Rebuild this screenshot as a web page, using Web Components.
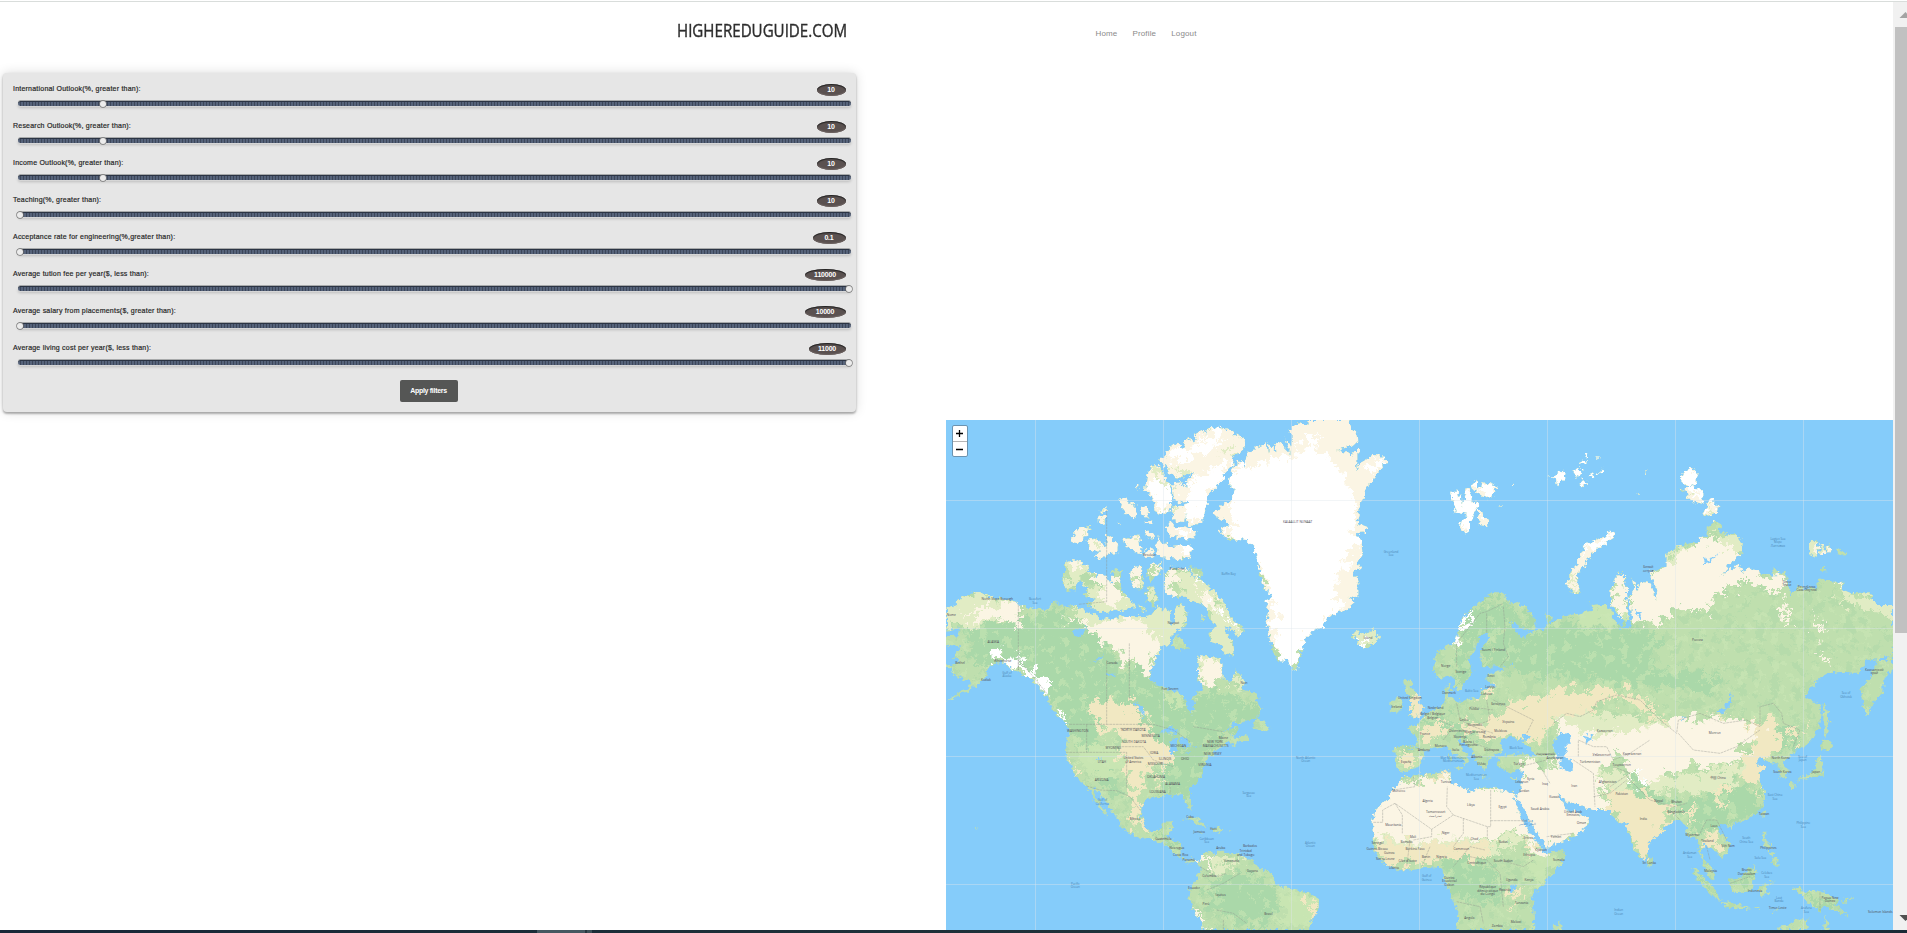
<!DOCTYPE html>
<html lang="en">
<head>
<meta charset="utf-8">
<title>HigherEduGuide.com</title>
<style>
html,body{margin:0;height:100%;overflow:hidden;background:#fff}
body{font-family:"Liberation Sans",Arial,sans-serif}
</style>
</head>
<body>
<app-shell>
  <site-header slot="main" brand="HIGHEREDUGUIDE.COM">
    <a>Home</a><a>Profile</a><a>Logout</a>
  </site-header>
  <filter-panel slot="main">
    <range-filter value="10" pos="10.3" badge="29">International Outlook(%, greater than):</range-filter>
    <range-filter value="10" pos="10.3" badge="29">Research Outlook(%, greater than):</range-filter>
    <range-filter value="10" pos="10.3" badge="29">Income Outlook(%, greater than):</range-filter>
    <range-filter value="10" pos="0.35" badge="29">Teaching(%, greater than):</range-filter>
    <range-filter value="0.1" pos="0.35" badge="33">Acceptance rate for engineering(%,greater than):</range-filter>
    <range-filter value="110000" pos="99.8" badge="41">Average tution fee per year($, less than):</range-filter>
    <range-filter value="10000" pos="0.35" badge="41">Average salary from placements($, greater than):</range-filter>
    <range-filter value="11000" pos="99.8" badge="37">Average living cost per year($, less than):</range-filter>
    <span slot="action">Apply filters</span>
  </filter-panel>
  <world-map slot="main"></world-map>
  <scroll-rail slot="rail"></scroll-rail>
  <task-strip slot="bottom"></task-strip>
</app-shell>

<script>
const define = (name, html, setup) => customElements.define(name, class extends HTMLElement {
  constructor() {
    super();
    this.attachShadow({ mode: 'open' }).innerHTML = html;
  }
  connectedCallback() { if (setup) setup(this, this.shadowRoot); }
});

define('app-shell', `
<style>
:host{display:grid;grid-template:2px 1fr 3px / minmax(0,1fr) 14px;height:100vh;width:100vw;background:#fff;overflow:hidden}
.line{grid-column:1/3;border-top:1px solid #fff;background:#d9dddb;box-sizing:border-box}
.main{display:flex;flex-direction:column;min-height:0;overflow:hidden}
.bottom{grid-column:1/3}
</style>
<div class="line"></div><div class="main"><slot name="main"></slot></div><slot name="rail"></slot><div class="bottom"><slot name="bottom"></slot></div>`);

define('site-header', `
<style>
:host{display:flex;height:71px;box-sizing:border-box;padding:0 0 0 676.5px;align-items:flex-start;flex:none}
.brand{width:419px;padding-top:16px;font:500 18px/24px "Open Sans",sans-serif;color:#2d2d2d;-webkit-text-stroke:.4px #2d2d2d}
.brand span{display:inline-block;transform-origin:0 50%;white-space:nowrap}
nav{display:flex;gap:15px;padding-top:27px;font-size:8px;letter-spacing:.15px;line-height:10px;color:#8a8a8a}
</style>
<div class="brand"><span></span></div><nav><slot></slot></nav>`, (el, root) => {
  const s = root.querySelector('span');
  s.textContent = el.getAttribute('brand');
  s.style.transform = `scaleX(${170.5 / s.offsetWidth})`;
});

define('filter-panel', `
<style>
:host{display:flex;flex-direction:column;flex:none;width:853px;height:339px;margin-left:3px;box-sizing:border-box;background:#e6e6e6;border-radius:4px;padding-top:10px;
 box-shadow:0 2px 2px rgba(0,0,0,.22),0 1px 3px rgba(0,0,0,.14),0 0 12px rgba(0,0,0,.14)}
button{align-self:center;margin:1px 2px 0 0;width:58px;height:22px;padding:0;border:0;border-radius:2px;background:#555655;color:#fff;font:bold 7px/22px "Liberation Sans",Arial,sans-serif;letter-spacing:-.3px}
</style>
<slot></slot><button><slot name="action"></slot></button>`);

define('range-filter', `
<style>
:host{display:block;height:37px;flex:none}
.head{display:flex;justify-content:space-between;height:14px;padding:1px 10.5px 0 10px;box-sizing:border-box;font-size:7px;line-height:10px;color:#222;-webkit-text-stroke:.2px #333}
label{letter-spacing:.22px}
output{height:12px;line-height:12px;text-align:center;border-radius:50%;background:#5a5150;color:#fff;-webkit-text-stroke:0;box-shadow:inset 0 1px 1px #222,inset 0 -1px 1px #6d6361;flex:none;font-weight:bold;letter-spacing:-.2px}
.track{margin:4px 5.5px 0 14.5px;border-radius:3px;border-top:1px solid #2b3444;box-sizing:border-box;height:5px;
 background:repeating-linear-gradient(90deg,#56637a 0 2px,#3c4659 2px 3px);box-shadow:0 -1px 0 #a8aaab,0 1px 0 #d6d6d6,0 2px 3px rgba(0,0,0,.18);display:flex;align-items:center}
.gap{width:var(--pos);flex:none}
i{width:6px;height:6px;margin-left:-3px;margin-top:-1px;border-radius:50%;background:#ececec;box-shadow:0 0 0 .7px #777;flex:none}
</style>
<div class="head"><label><slot></slot></label><output></output></div>
<div class="track"><span class="gap"></span><i></i></div>`, (el, root) => {
  const o = root.querySelector('output');
  o.textContent = el.getAttribute('value');
  o.style.width = el.getAttribute('badge') + 'px';
  el.style.setProperty('--pos', el.getAttribute('pos') + '%');
});

define('map-zoom', `
<style>
:host{display:block;width:14px;border:1px solid #6b93b0;border-radius:2px;background:#fff;overflow:hidden}
b{display:flex;align-items:center;justify-content:center;height:15px}
b+b{border-top:1px solid #b5b5b5;height:14px}
svg{display:block;width:7px;height:7px}
</style>
<b><svg viewBox="0 0 6 6"><path d="M3 0v6M0 3h6" stroke="#000" stroke-width="1.1"/></svg></b>
<b><svg viewBox="0 0 6 6"><path d="M0 3h6" stroke="#000" stroke-width="1.1"/></svg></b>`);

define('scroll-rail', `
<style>
:host{display:flex;flex-direction:column;background:#f1f1f1;overflow:hidden}
svg{display:block;width:14px;flex:none}
.thumb{height:606px;margin-left:2px;background:#c1c1c1}
.space{flex:1}
</style>
<svg height="25" viewBox="0 0 14 25"><path d="M6.5 16l6-6 6 6z" fill="#a3a3a3"/></svg>
<div class="thumb"></div><div class="space"></div>
<svg height="18" viewBox="0 0 14 18"><path d="M6.5 3l6 6 6-6z" fill="#505050"/></svg>`);

define('task-strip', `
<style>
:host{display:flex;height:3px;background:linear-gradient(90deg,#182838,#1c2f38 40%,#22343c 75%,#1a2b36)}
.lead{width:537px}
.active{width:48px;background:#465861}
.seam{width:2px;background:#26363e}
.stack{width:5px;background:#3d5058}
</style><span class="lead"></span><span class="active"></span><span class="seam"></span><span class="stack"></span>`);

/* Map data: each capital letter picks the chart sheet whose origin the following points use. */
const SHEETS = { A: [-18, -30], B: [882, -30], C: [1842, -30], D: [-18, 720], E: [882, 720], F: [1842, 720] };
const trace = (str, closed = true) => str.trim().split(/\s*;\s*/).filter(Boolean).map(poly => {
  let o = trace.last, pts = [];
  for (const t of poly.trim().split(/\s+/)) {
    if (SHEETS[t]) { o = trace.last = SHEETS[t]; continue; }
    const [x, y] = t.split(',').map(Number);
    pts.push((x + o[0]) + ' ' + (y + o[1]));
  }
  return 'M' + pts.join('L') + (closed ? 'Z' : '');
}).join('');
trace.last = SHEETS.A;

const LAND = `
A 0,600 45,590 60,565 100,545 140,555 180,568 220,572 245,585 270,600 300,590 320,600 345,570 365,590 400,585 430,600 460,612 490,630 540,620 600,622 625,620 640,600 655,590 665,602 680,590 692,610 690,645 705,632 705,610 715,585 735,590 742,615 735,650 712,660 690,680 690,702 660,715 650,740 635,780 D 635,20 628,50 650,75 690,90 735,110 740,145 755,165 765,140 758,110 775,95 790,85 775,60 773,0 A 775,740 800,738 840,745 D 845,20 848,55 875,62 885,28 900,45 910,60 915,90 950,105 960,118 E 40,115 62,145 50,170 30,180 0,188 D 925,185 880,190 850,215 875,205 895,200 890,215 870,230 900,235 925,222 925,237 890,250 878,262 872,240 855,250 850,258 830,270 810,290 795,305 790,330 785,350 760,375 748,390 750,410 756,445 745,447 732,420 728,405 710,403 680,405 665,412 640,410 615,420 605,440 603,470 615,500 630,517 655,515 665,500 670,488 697,487 690,510 680,530 700,540 728,545 725,575 722,588 740,600 760,598 780,607 780,620 765,606 745,608 725,597 700,577 690,562 660,547 640,537 620,532 600,535 575,522 545,502 540,480 525,465 510,445 500,430 490,415 475,395 458,380 470,410 485,435 500,465 502,470 490,460 475,435 462,420 455,400 440,378 420,360 405,345 395,320 380,300 378,275 383,240 390,215 385,200 370,180 350,165 335,140 320,110 300,90 280,65 250,45 225,30 200,15 180,5 150,20 130,60 90,90 50,110 22,122 60,95 85,80 95,65 60,50 40,42 35,25 0,20 A 0,770 60,760 50,740 35,745 64,710 30,705 0,695 0,682 50,680 60,655 0,665;
A 375,455 405,448 430,462 450,470 440,490 415,515 405,540 385,545 368,520 375,490;
425,500 445,485 465,490 460,503 480,495 500,500 518,525 515,490 525,475 545,480 540,510 545,540 575,575 590,590 540,600 500,605 470,605 440,580 470,570 430,555 445,535 430,530;
565,490 590,470 608,468 605,500 612,525 595,540 580,525;
628,465 665,460 660,485 640,500 632,520 622,500; 622,530 640,530 652,570 640,590 618,570;
675,490 690,473 745,475 750,500 775,500 800,525 830,550 850,570 860,600 880,630 910,650 905,670 890,680 880,660 850,655 880,700 885,740 860,735 835,700 805,690 810,665 830,650 805,625 800,590 760,575 735,560 700,560 675,548 672,510;
750,472 785,480 790,497 760,497; 700,680 715,675 730,695 748,715 722,720 702,710; 788,615 800,628 785,640; 597,585 620,600 610,610;
650,380 665,400 700,410 750,405 758,420 750,445 700,445 655,440 650,410;
660,140 675,142 685,120 712,98 725,112 738,118 732,95 748,85 768,100 765,72 785,60 798,78 800,58 820,52 845,55 870,60 890,75 912,90 910,115 880,140 885,155 860,182 840,220 800,260 800,290 795,320 770,345 745,348 735,300 740,260 735,215 765,185 720,203 685,195 680,175 665,160;
680,350 692,332 705,348 740,350 770,365 765,385 740,385 690,380; 625,180 645,162 665,175 680,215 695,225 695,260 690,300 670,312 640,300 640,270 615,240 620,205;
700,220 725,217 745,250 740,275 715,280 700,260; 695,290 740,285 735,340 705,335;
538,265 555,265 570,280 585,285 590,320 575,325 560,310 545,290; 600,290 620,290 626,322 610,322; 617,332 640,335 640,342 618,340;
393,390 415,355 450,345 445,370 420,395 405,395; 440,390 470,385 480,400 500,412 500,375 515,380 520,400 535,400 530,430 505,432 475,447 465,440 480,424 450,425;
475,320 495,318 495,340 478,345; 475,303 500,292 500,306; 548,380 575,388 575,375 600,378 605,430 580,425 555,405; 620,415 635,412 640,440 612,440; 615,362 640,370 642,385 620,385; 585,228 592,225 592,240; 536,335 545,355 538,345;
A 870,210 880,170 905,150 915,175 B 15,160 20,135 45,115 80,100 84,135 88,103 110,130 105,95 118,98 150,130 137,85 155,110 155,70 145,60 175,40 210,44 205,20 320,20 330,50 350,70 352,95 335,110 285,120 325,125 335,140 343,120 355,120 355,155 342,188 365,155 400,135 430,137 440,155 415,185 400,215 375,240 370,270 360,285 355,320 350,340 378,350 378,370 350,372 368,400 370,430 355,460 362,475 340,480 352,520 352,565 325,560 345,575 310,605 265,618 250,650 215,665 195,690 180,740 175,780 E 175,10 165,30 145,5 120,0 B 118,760 100,730 90,690 80,640 85,600 72,570 95,560 65,520 60,470 40,410 20,390 0,387 A 895,387 870,392 848,375 835,360 870,345 830,320 820,310 850,285 875,270 885,240 870,225;
B 335,668 350,660 355,672 365,670 380,668 400,658 420,680 410,700 380,715 350,705 355,692 338,680;
630,245 650,245 655,265 665,250 668,290 680,235 690,240 695,270 718,285 700,310 682,375 660,350 665,330 685,315 660,310 648,308 635,270;
695,225 710,215 712,232 725,230 735,212 740,218 770,230 765,250 740,268 715,250 700,240; 713,300 725,300 730,320 748,330 735,348 720,345;
808,228 820,222 815,228; 778,283 790,283 780,287; 925,200 945,198 960,185 977,190 972,205 950,223 948,208; 985,218 995,215; 1003,185 1020,175 1020,195;
C 0,190 15,185 15,200 0,205; 40,185 58,178 68,190 50,200; 55,165 70,150 78,160; 85,198 105,190 100,208; 113,190 132,173 132,188 120,193; 58,222 70,210 82,215 70,228; 75,138 82,132 80,140; 112,142 120,143 116,146; 254,186 262,184 260,189; 228,250 237,253 232,256;
20,520 25,505 40,480 55,450 80,400 110,390 140,370 160,362 165,380 140,400 110,415 90,440 70,470 55,490 50,520 65,555 45,555 20,535;
370,185 385,180 392,167 400,180 412,190 405,220 380,230 360,210; 358,235 375,235 370,245; 375,240 395,225 410,235 430,235 430,285 405,278 380,255; 430,320 440,290 450,265 475,290 470,308 445,315; 485,313 495,317; 346,172 358,172;
750,400 765,393 778,410 770,440 752,432; 782,420 790,398 798,435 780,435; 797,410 812,405 812,427 800,427; 830,415 860,430 855,438 835,430; 780,475 795,467 800,487 785,485; 847,373 852,372 850,376;
175,485 188,487 180,492; 80,570 95,580 85,578;
B 583,740 605,715 640,705 655,660 665,625 700,590 730,570 755,550 790,550 800,570 840,585 870,600 890,640 880,660 840,655 825,635 812,640 835,672 860,692 862,670 895,660 915,660 925,640 913,610 935,620 930,640 960,625 1000,610 C 55,615 100,600 95,585 130,582 155,605 165,640 185,650 195,635 155,590 150,550 165,500 195,498 200,530 205,600 200,640 180,655 205,655 215,640 215,600 208,560 222,545 215,500 230,540 245,515 270,520 288,570 292,540 265,485 300,475 320,470 320,430 370,405 410,395 430,380 440,380 440,350 465,335 485,345 475,355 490,375 530,372 548,400 545,430 520,450 480,500 520,470 540,470 548,490 560,475 590,480 600,490 650,500 632,488 640,475 655,490 675,483 685,530 697,555 710,530 770,535 780,505 820,515 850,515 850,540 880,553 935,550 945,585 1050,585 F 1050,0 985,35 970,60 970,100 945,120 920,165 905,120 905,80 935,50 945,20 950,0 C 980,750 990,735 970,740 960,748 920,750 900,778 F 900,40 850,35 795,42 760,75 735,110 760,125 775,125 785,160 780,200 760,230 730,265 705,265 700,280 680,300 665,305 685,335 680,350 658,357 660,330 650,310 640,305 615,302 600,290 585,305 600,318 620,318 597,340 600,370 615,390 615,420 600,450 570,475 540,485 510,500 480,490 475,510 500,535 510,560 505,580 478,600 475,580 465,570 445,560 430,550 425,580 430,600 455,620 465,650 460,662 445,645 432,615 420,590 415,560 410,530 395,535 385,530 380,500 360,480 345,480 320,500 290,530 265,555 262,590 245,600 225,570 205,520 200,490 190,485 175,490 160,470 145,450 100,450 70,445 60,435 30,428 10,420 0,400 E 955,403 965,430 975,440 985,455 1000,462 F 30,465 40,450 48,448 60,465 87,480 75,505 40,530 0,547 E 925,560 915,565 905,540 880,500 860,460 840,430 830,415 838,390 845,370 850,335 830,330 810,340 790,330 770,312 775,303 768,295 800,285 850,280 893,290 870,265 845,250 860,240 870,225 840,225 855,238 830,240 815,230 790,230 780,250 785,275 770,282 740,300 735,330 720,320 705,290 700,275 670,245 655,235 660,255 685,285 680,315 665,300 645,285 630,270 620,255 600,260 575,265 555,275 540,310 530,325 500,335 485,335 465,325 465,290 463,262 495,262 530,265 530,235 500,200 530,195 545,175 580,150 600,140 615,125 612,90 628,70 630,95 625,115 660,125 700,115 722,110 722,90 740,85 770,80 745,65 740,45 775,35 800,20 770,18 730,22 722,5 B 722,750 720,730 750,680 735,670 715,690 700,720 685,750 690,778 E 690,10 700,30 680,60 660,90 648,90 640,50 625,45 595,60 583,30;
E 490,65 500,58 515,55 512,80 525,100 540,112 535,125 552,140 540,165 497,173 520,160 503,148 515,135 510,110 495,95; 455,125 480,110 487,140 475,155 452,155;
490,350 540,345 600,335 632,335 630,370 660,380 700,400 715,380 760,385 800,395 820,392 833,425 818,405 830,440 850,490 880,530 905,567 915,580 975,572 970,600 940,640 900,680 875,710 880,740 885,850 650,850 655,760 640,720 625,690 610,650 608,625 560,620 520,630 480,632 450,620 415,595 395,550 400,525 395,485 410,450 440,420 460,385 485,365;
935,850 945,800 960,780 972,850;
D 780,605 790,585 815,570 822,590 830,575 850,575 900,585 930,600 960,625 E 95,640 110,675 150,685 210,700 240,720 238,750 210,790 200,850 D 805,850 785,790 745,715 750,680 770,655 782,630;
718,482 745,468 775,478 800,497 780,499 755,480 740,474; 812,505 835,502 855,512 825,516; 768,515 790,517 780,520; 865,514 878,515 868,518; 107,498 114,500 112,507; 75,482 80,484;
E 35,205 55,165 60,185 72,185 88,215 60,210; 645,322 668,322 662,333; 722,350 748,350 725,353; 815,357 832,352 820,362; 625,285 634,290 630,308;
F 788,238 820,255 805,272 780,275; 775,288 790,300 785,348 760,352 725,358 705,360 740,345 765,325; 690,370 705,370 700,390 690,390; 712,362 730,360 720,367; 790,120 800,150 808,190 795,238 790,190;
605,455 617,450 612,478; 507,488 523,485 515,510; 605,515 620,515 615,540 637,560 622,565 607,545; 640,590 655,600 655,622 635,612; 622,575 648,578 635,590; 595,592 612,572; 262,588 277,600 270,622 260,610;
393,627 412,632 430,650 460,680 485,720 465,715 430,680 410,650; 483,726 530,732 570,745 545,748 500,740; 510,660 540,655 560,635 582,618 590,635 580,660 575,690 545,700 520,698 512,680; 600,680 610,672 648,662 615,678 625,700 612,692 608,718 600,700; 697,683 725,683 730,700 760,690 800,700 835,722 825,735 865,767 830,755 800,740 780,752 750,735 735,712 705,695; 635,850 660,800 690,795 700,780 742,777 735,850; 780,850 795,768 820,850; 580,745 605,744 600,750; 632,758 655,745 640,760; 840,722 870,715 880,708 860,728; 672,655 668,668; 815,240 822,260`;

const WATER = `E 940,250 960,222 F 0,218 30,222 32,248 15,265 20,290 38,310 38,335 E 985,335 960,325 958,295 940,270;
F 75,228 100,222 92,245 78,248; 468,157 490,145 500,130 515,97 512,130 490,155; 230,270 245,270 240,274; 365,172 378,174 368,178;
D 655,218 685,198 715,212 700,224 675,216; 692,235 715,238 705,278 690,280; 718,232 738,233 750,255 732,266; 730,285 755,272 745,283; 760,262 787,256 765,265; 580,125 592,125 610,150 612,180 600,150; 500,40 530,42 505,48; 475,288 483,300 474,298;
A 450,757 470,745 500,728 480,748; 398,660 440,655 420,680 400,675; 375,660 388,660;
E 806,677 830,670 830,690 812,697; 848,640 852,655; 790,745 795,765; 812,15 820,5 818,22; 828,785 834,805; 832,420 842,425 872,485 905,545 912,565 900,545 870,510 845,465;
C 428,440 440,450 475,430 465,440 450,455 435,460; 325,570 328,590; 225,600 240,605 245,630 238,628`;

/* Vegetation and ice zones, painted in order inside the coastline. */
const ZONES = [
['#aad8a9', `A 60,640 200,640 300,605 350,600 440,640 520,720 540,780 D 600,10 660,80 740,110 780,100 850,95 960,130 E 70,180 D 850,230 800,290 780,370 740,400 700,400 660,330 640,240 610,170 520,120 460,120 470,200 480,300 530,360 530,420 500,380 400,230 300,90 200,0 A 100,760;
D 700,350 790,340 750,410 640,410; 640,500 730,560 700,570;
B 660,680 690,600 780,570 850,620 1020,650 C 140,660 240,650 300,700 260,780 F 480,40 440,110 400,90 200,70 100,60 E 900,50 800,30 720,10 B 780,660 700,700 E 700,60 640,70;
C 360,550 480,510 500,520 440,560 380,570;
F 360,420 430,410 500,370 610,400 600,460 480,500 400,520 370,480; 470,370 540,370 530,400; 600,200 730,200 700,280 640,260;
180,340 240,370 320,420 400,430 400,450 300,430 220,390;
E 620,610 700,590 790,650 780,720 680,730 630,680; D 790,690 860,640 960,650 E 110,690 100,780 20,800 D 860,770 800,740; F 510,650 590,630 570,700; 700,690 850,740 800,750; 425,640 480,720 400,640; E 530,180 620,170 720,240 660,230; E 560,270 480,275 470,300;`],
['#c8e5b2', `C 0,590 160,580 200,650 60,640; E 860,560 960,590 880,700 870,600; E 120,690 230,710 220,800 130,800; D 400,260 560,260 540,340 440,350; D 660,80 740,110 740,150 690,120; E 400,560 440,560 470,600 420,600`],
['#e1ecc4', `A 0,590 100,540 250,580 230,620 100,650 0,640; A 370,440 460,460 400,560; A 400,590 640,600 700,560 760,620 690,700 620,760 520,700 440,650; A 430,530 560,550 600,610 470,620; 600,520 660,530 650,600; 700,470 800,500 900,640 900,760 790,700 820,640 740,570; A 760,730 860,740 D 860,60 770,60; C 310,460 330,420 550,360 550,410 480,500 400,440; C 850,520 1000,580 1000,620 840,580; F 0,170 130,160 220,170 350,180 280,240 0,230; F 200,300 360,350 490,330 580,280 640,230 600,310 480,390 400,400 280,390; F 100,340 230,330 150,400; D 870,30 920,50 900,100; E 395,520 520,540 760,545 870,510 890,540 760,570 540,560 400,545; B 60,490 80,500 110,620 90,680 60,640; D 800,640 830,590 910,590 880,620; C 740,380 800,380 800,450 740,450; B 330,650 430,650 430,720 330,720`],
['#f1e8c2', `D 455,118 560,130 620,170 620,210 690,270 700,320 620,330 600,420 570,390 545,300 540,210 480,215 462,170; D 385,290 425,350 410,360; D 600,405 610,430 600,500 640,520 600,520 540,450 560,470; D 655,310 670,320 660,400;
E 820,130 1000,80 1020,150 940,180 900,250 800,220 720,210 660,200 740,190; F 0,90 160,90 250,110 310,180 160,105 60,170 0,160; E 540,200 620,190 600,240 550,250; E 470,290 530,280 540,310 490,330; E 620,180 820,210 770,240 680,225; E 700,90 760,90 720,120; E 410,550 760,555 740,590 600,600 540,610 470,620 400,580; 850,540 890,560 870,600; 
F 150,370 230,390 340,460 280,540 250,600 200,510 150,460; F 450,150 560,190 600,180 650,180 670,240 640,260 620,330 600,400 530,320 600,250; F 460,390 500,390 500,420 470,430; F 430,520 470,510 480,570 430,555; F 380,450 400,450 400,520; F 690,210 730,200 700,250; E 790,700 850,720 800,740 850,690; E 200,740 240,720 230,780; E 460,260 520,330 500,340; F 80,240 150,250 150,290 90,270; E 960,350 1000,400 960,380; E 900,350 950,390 930,390; 500,350 640,330 620,355;E 490,100 560,120 550,170 510,170`],
['#fbf5e4', `A 60,620 170,575 250,590 230,640 120,620; A 380,620 460,640 500,640 560,620 620,650 660,720 640,790 560,760 520,710 440,660; D 560,-20 650,0 630,50; A 450,490 520,500 560,560 500,590; A 380,140 860,20 1000,60 940,180 800,360 800,460 360,460 380,330; 560,470 610,460 600,540; 625,455 670,455 640,500; 670,480 710,480 700,560 670,550; 770,540 830,560 850,610 800,600; D 780,0 840,0 840,70 800,90; 340,650 410,650 350,720 370,760 300,690;
B 60,350 110,500 110,660 60,580; A 800,200 900,140 B 20,90 210,10 470,10 470,200 400,500 350,620 200,700 150,780 80,700 60,500 0,400 A 800,400; B 600,190 1020,150 1020,250 820,400 600,400; C 0,120 300,120 500,150 500,330 400,340 340,200 180,390 60,510 30,580 -30,480; C 140,490 200,490 200,640 160,580; C 210,510 320,460 440,380 500,400 530,430 560,470 680,510 660,550 560,510 460,560 440,610 350,590 290,640 210,630; C 670,560 690,640 670,670; 760,590 800,680 770,650; 800,640 850,720; 770,730 830,750 790,745; 778,390 798,390 798,440 778,440; 820,510 850,510 840,540;
E 380,330 470,370 500,365 640,350 820,395 850,300 950,330 F 0,190 60,210 250,210 350,180 500,170 600,210 520,270 590,270 540,290 450,330 400,310 330,330 260,370 210,320 190,290 150,300 110,350 150,440 100,460 90,500 0,560 E 900,580 850,510 750,540 520,545 390,520; F 210,310 330,340 300,360; D 745,710 790,800 830,819 780,819; 780,590 820,565 800,620`],
['#e1ecc4', `A 400,345 460,340 440,370; 480,290 500,290 490,345; 690,280 720,280 710,310; 625,170 650,165 700,250 690,260; 830,130 890,100 870,130; 690,180 760,180 720,205; 440,390 470,390 470,430; 550,375 580,380 580,415; F 60,200 200,200 120,230; C 380,240 400,230 390,265; C 430,320 440,280 445,315; C 40,530 60,560 20,560; C 45,490 60,470 40,540`],
['#ffffff', `A 705,110 740,115 830,60 850,90 830,120 740,150 700,150; A 740,215 860,150 850,200 800,270 800,330 745,345; 650,200 690,250 690,300 640,270 630,220; 690,360 760,365 750,385; 720,410 760,410 745,445; 750,475 800,530 780,500; 800,560 830,580 880,640 890,660; D 230,-20 340,90 320,110 230,20; 340,150 390,165 370,175; A 150,745 180,720 250,770 230,780;
B -60,180 40,170 160,130 200,105 250,120 310,190 340,250 350,280 340,350 350,400 330,450 290,500 290,560 310,600 200,690 160,800 110,750 100,600 60,470 0,385 A 860,380 880,350 870,280; B 190,70 240,70 230,100 200,110; B 370,170 430,130 450,150 400,200; B 350,685 400,680 380,710; B 620,230 700,230 720,300 680,390 640,300; 700,210 790,210 750,280; B 900,170 1020,160 1020,240 900,240; C -20,120 150,120 140,210 0,240; C 60,440 90,390 165,355 170,385 100,420; C 360,160 420,180 440,290 370,220; 440,270 480,280 460,310; F 200,335 250,355 250,385 220,355;
B 620,700 650,640 700,600 710,605 670,650 630,710`]
];

const BORDERS = `A 235,585 235,780 D 235,0 280,50 320,100; D 388,193 640,193 700,210 750,245; D 378,277 560,277 560,385; 440,378 480,390 530,392 570,410 600,450; 440,193 440,277; 500,0 500,193; 568,0 568,120; A 568,700 568,780; A 500,300 500,575 415,583;
D 540,205 620,205; 545,260 610,260 640,300 700,320; 690,380 690,403; 760,200 850,215; 650,540 690,530;D 780,620 830,650 860,640; 800,690 850,670 900,640; 830,750 880,760 920,790; 850,780 850,819;
E 400,487 428,487 428,450 465,430 575,508 640,465 620,440 622,380; 465,430 487,465 487,520; 640,465 742,500 752,500 752,390; 752,482 860,482; 742,500 742,540; 575,508 575,530 520,540; 670,475 670,520 640,560; 735,570 690,560 640,620; 520,350 525,380 460,390; 570,560 545,620; 510,540 500,620; 780,600 850,620 880,600; 650,725 720,740 730,790; 690,590 740,600 780,640 790,740; 920,530 1000,520;
E 530,265 570,275; 600,180 640,200 610,240; 700,200 750,180 740,120; 760,120 820,150 880,180 860,220; 760,150 690,140; 650,130 660,180 700,200 760,220; 700,250 760,270; 840,320 920,300; 900,320 930,370; 940,190 980,160 F 60,170 100,150 110,125 170,105 240,120 300,180 350,220 355,180 420,160 490,190 560,180 600,200 600,140 640,130 665,160 670,190 720,210 700,260; 355,220 400,270 480,280 530,260 600,210; 55,290 55,240 100,260 140,260 160,300 210,280 270,240; 40,300 100,340 105,440; 160,320 210,340 150,380; 200,350 270,420 340,440 380,430; 330,450 360,480; 420,520 440,480 470,480 500,540; 100,410 150,400 200,360; 780,697 780,752; 440,560 450,600; 510,670 570,650; B 740,610 740,670; 790,590 795,650 790,700 805,740 780,770; B 650,770 650,700 720,610 740,605 790,580`;

const PLACES = `
A 172,570 North Slope Borough;160,699 ALASKA;188,756 Whitehorse;60,763 Bethel;34,617 Nome;628,438 Resolute;712,479 Pond Inlet;700,641 Naujaat;516,762 Canada
B 173,338 KALAALLIT NUNAAT;384,688 Ísland;760,722 Suomi / Finland;617,772 Norge
C 265,475 Белый|остров;412,694 Россия;680,518 Тикси|Тикси;740,533 Республика|Саха (Якутия)
D 138,64 Kodiak;690,90 Fort Severn;912,72 Nain;413,215 WASHINGTON;580,212 NORTH DAKOTA;632,232 MINNESOTA;582,249 SOUTH DAKOTA;715,261 MICHIGAN;520,267 WYOMING;642,281 IOWA;580,298 United States|of America;675,301 ILLINOIS;735,300 OHIO;646,315 MISSOURI;486,309 UTAH;485,362 ARIZONA;648,354 OKLAHOMA;698,374 ALABAMA;653,399 LOUISIANA;825,248 NEW YORK;827,262 MASSACHUSETTS;818,284 NEW JERSEY;795,317 VIRGINIA;850,236 Maine;585,479 México;750,473 Cuba;778,519 Jamaica;820,510 Haiti;670,541 Guatemala;710,568 Nicaragua;722,588 Costa Rica;746,603 Panamá;842,568 Aruba;930,562 Barbados;917,577 Trinidad|and Tobago;875,607 Venezuela;937,635 Guyana;808,651 Colombia;762,687 Ecuador;798,734 Perú;842,707 Iquitos
E 85,765 Brasil;510,116 United Kingdom;470,143 Ireland;663,38 Sverige;627,101 Danmark;587,147 Nederland;578,166 België / Belgique|Belgien;555,224 France;650,217 Österreich;672,184 Česko;702,151 Polska;740,106 Lietuva;750,83 Latvija;753,52 Eesti;775,134 Беларусь;805,188 Україна;705,198 Slovensko;705,218 Magyarország;782,216 Moldova;748,233 România;755,273 България;685,248 Bosna i|Hercegovina;660,235 Slovenija;647,272 Italia;602,260 Monaco;552,274 Andorra;498,310 España;725,315 Ελλάς;710,293 Albania;837,315 Türkiye;915,285 Հայաստան;945,298 Azərbaycan;872,360 Syria;915,376 Iraq;845,368 Lebanon;853,395 Jordan;943,414 Kuwait;1003,380 Iran;900,449 Saudi Arabia;788,443 Egypt;693,437 Libya;563,426 Algeria;587,459 Tamanrasset|تمنراست;618,368 Tunisia;476,395 Morocco;460,499 Mauritania;519,533 Mali;617,521 Niger;703,540 Chad;790,549 Sudan;948,533 Yemen;865,537 Eritrea;903,573 Djibouti;413,551 Senegal;411,571 Guinea-Bissau;448,583 Guinea;436,601 Sierra Leone;503,607 Côte d’Ivoire;462,626 Liberia;525,571 Burkina Faso;500,550 Bamako;558,593 Benin;605,593 Nigeria;664,569 Cameroun;710,613 Centrafrique;790,607 South Sudan;868,587 Ethiopia;957,602 Somalia;628,656 Guinea|Ecuatorial|Gabon;743,685 République|démocratique|du Congo;815,663 Uganda;867,662 Kenya;795,693 Rwanda;845,731 Tanzania;688,777 Angola;772,800 Zambia;828,790 Malawi
F 943,32 Камчатский|край;134,217 Қазақстан;464,221 Монгол;124,287 Ўзбекистон;216,285 Кыргызстан;90,308 Türkmenistan;185,317 Тоҷикистон;143,369 Afghanistan;185,404 Pakistan;39,458 United Arab|Emirates;64,491 Oman;250,479 India;296,425 Nepal;350,430 Bhutan;348,460 Bangladesh;398,527 Myanmar;442,546 Thailand;462,501 Laos;504,560 Việt Nam;268,611 Sri Lanka;474,356 中国 China;662,298 North Korea;667,338 South Korea;768,339 Japan;612,464 Taiwan;625,566 Philippines;452,635 Malaysia;560,634 Brunei|Darussalam;585,697 Indonesia;653,747 Timor-Leste;810,716 Papua New|Guinea;961,758 Solomon Islands`;
const SEAS = `
A 285,571 Beaufort|Sea;866,495 Baffin Bay
B 453,428 Greenland|Sea
C 654,389 Laptev Sea|Море|Лаптевых
D 201,41 Gulf of|Alaska;487,424 Gulf of|California;926,401 Sargasso|Sea;800,539 Caribbean|Sea;406,674 Pacific|Ocean
E 197,296 North Atlantic|Ocean;211,551 Atlantic|Ocean;695,96 Baltic Sea;828,268 Black Sea;640,296 Mar Mediterráneo|Mediterranean;709,349 Mediterranean|Sea;862,485 Red Sea|البحر الأحمر;560,651 Gulf of|Guinea
F 858,103 Sea of|Okhotsk;728,293 Sea of|Japan;645,409 East China|Sea;730,493 Philippine|Sea;559,538 South|China Sea;389,583 Andaman|Sea;601,598 Sulu Sea;620,643 Celebes|Sea;657,716 Laut|Banda;739,747 Arafura|Sea;176,753 Indian|Ocean`;
const labels = (src, cls) => src.trim().split('\n').map(row => {
  const o = SHEETS[row[0]];
  return row.slice(2).split(';').map(item => {
    const m = item.match(/^(\d+),(\d+) (.*)$/), x = +m[1] + o[0], y = +m[2] + o[1];
    return `<text class="${cls}" x="${x}" y="${y}">` + m[3].split('|').map((t, i) => `<tspan x="${x}" dy="${i ? 10.5 : 0}">${t}</tspan>`).join('') + '</text>';
  }).join('');
}).join('');

const gridX = [89.5, 217.5, 345.5, 473.5, 601.5, 729.5, 857.5].map(v => `M${v * 3} 0V1530`).join('');
const gridY = [80.5, 208.5, 336.5, 464.5].map(v => `M0 ${v * 3}H2841`).join('');

define('world-map', `
<style>
:host{display:block;position:relative;flex:none;align-self:flex-end;width:947px;height:510px;margin-top:8px;background:#85ccfa;overflow:hidden}
svg.chart{display:block;width:947px;height:510px}
map-zoom{position:absolute;left:5.5px;top:5px}
text{font:9.6px "Open Sans","Noto Sans CJK SC",sans-serif;text-anchor:middle;fill:#4d4a55}
text.sea{fill:#4c86b5;font-size:9px}
</style>
<svg class="chart" viewBox="0 0 2841 1530">
<defs>
<clipPath id="coast"><path d="${trace(LAND)}"/></clipPath>
<filter id="ragged" x="0" y="0" width="2841" height="1530" filterUnits="userSpaceOnUse" color-interpolation-filters="sRGB"><feTurbulence type="fractalNoise" baseFrequency=".07" numOctaves="3" seed="4"/><feDisplacementMap in="SourceGraphic" scale="24" xChannelSelector="R" yChannelSelector="G"/></filter>
<filter id="blend" x="0" y="0" width="2841" height="1530" filterUnits="userSpaceOnUse" color-interpolation-filters="sRGB"><feTurbulence type="fractalNoise" baseFrequency=".035" numOctaves="5" seed="9"/><feDisplacementMap in="SourceGraphic" scale="90" xChannelSelector="R" yChannelSelector="G"/></filter>
<filter id="mottle" x="0" y="0" width="2841" height="1530" filterUnits="userSpaceOnUse" color-interpolation-filters="sRGB"><feTurbulence type="fractalNoise" baseFrequency=".03" numOctaves="5" seed="21"/><feColorMatrix values="0 0 0 0 .667  0 0 0 0 .847  0 0 0 0 .663  22 0 0 0 -12.2"/></filter>
<filter id="mottle2" x="0" y="0" width="2841" height="1530" filterUnits="userSpaceOnUse" color-interpolation-filters="sRGB"><feTurbulence type="fractalNoise" baseFrequency=".04" numOctaves="5" seed="33"/><feColorMatrix values="0 0 0 0 .80  0 0 0 0 .91  0 0 0 0 .71  22 0 0 0 -13.2"/></filter>
</defs>
<g filter="url(#ragged)"><g clip-path="url(#coast)">
<rect width="2841" height="1530" fill="#bfdfae"/>
<rect width="2841" height="1530" filter="url(#mottle)" opacity=".45"/>
<g filter="url(#blend)">${ZONES.slice(0, 2).map(z => `<path fill="${z[0]}" d="${trace(z[1])}"/>`).join('')}</g>
<rect width="2841" height="1530" filter="url(#mottle2)" opacity=".5"/>
<g filter="url(#blend)">${ZONES.slice(2).map(z => `<path fill="${z[0]}" d="${trace(z[1])}"/>`).join('')}</g>
</g>
<path fill="#85ccfa" d="${trace(WATER)}"/></g>
<path d="${trace(BORDERS, false)}" fill="none" stroke="#8d8f8a" stroke-opacity=".6" stroke-width="2" stroke-dasharray="8 2"/>
<path d="${gridX}${gridY}" stroke="#dfe6ea" stroke-opacity=".4" stroke-width="3" fill="none"/>
${labels(PLACES, 'land')}${labels(SEAS, 'sea')}
</svg>
<map-zoom></map-zoom>`);
</script>
</body>
</html>
